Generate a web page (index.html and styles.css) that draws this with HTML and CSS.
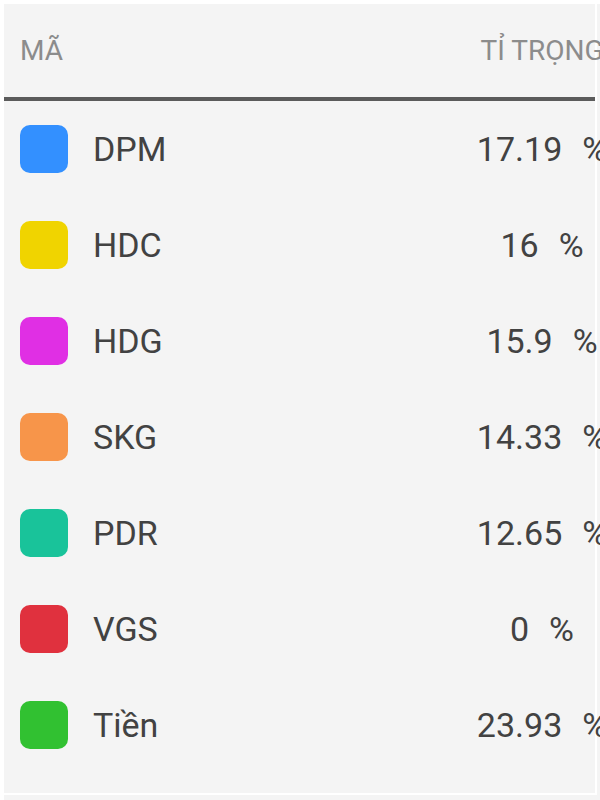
FILE: index.html
```html
<!DOCTYPE html>
<html lang="vi">
<head>
<meta charset="utf-8">
<link rel="stylesheet" href="styles.css">
</head>
<body>
<div class="page">
  <div class="table">
    <div class="head">
      <div class="name">Mã</div>
      <div class="val">Tỉ trọng</div>
    </div>
    <div class="row"><span class="sw sw-blue"></span><span class="name">DPM</span><span class="val">17.19<span class="pct">%</span></span></div>
    <div class="row"><span class="sw sw-yellow"></span><span class="name">HDC</span><span class="val">16<span class="pct">%</span></span></div>
    <div class="row"><span class="sw sw-magenta"></span><span class="name">HDG</span><span class="val">15.9<span class="pct">%</span></span></div>
    <div class="row"><span class="sw sw-orange"></span><span class="name">SKG</span><span class="val">14.33<span class="pct">%</span></span></div>
    <div class="row"><span class="sw sw-teal"></span><span class="name">PDR</span><span class="val">12.65<span class="pct">%</span></span></div>
    <div class="row"><span class="sw sw-red"></span><span class="name">VGS</span><span class="val">0<span class="pct">%</span></span></div>
    <div class="row"><span class="sw sw-green"></span><span class="name">Tiền</span><span class="val">23.93<span class="pct">%</span></span></div>
  </div>
</div>
</body>
</html>
```
FILE: styles.css
```css
html { background: #ffffff; }
body {
  margin: 0;
  padding: 4px 0 0 4px;
  font-family: Roboto, "Liberation Sans", sans-serif;
  overflow: hidden;
}
.page {
  background: #f4f4f4;
  height: 796px;
  width: 596px;
}
.table {
  width: 593px;
  height: 791px;
  border-right: 2px solid #ffffff;
  border-bottom: 2px solid #ffffff;
  box-sizing: border-box;
}
.head {
  display: flex;
  align-items: center;
  height: 93px;
  border-bottom: 4px solid #5b5b5b;
  padding-left: 16px;
  color: #8c8c8c;
  font-size: 28px;
  text-transform: uppercase;
}
.head .name { flex: 1; }
.row {
  display: flex;
  align-items: center;
  height: 96px;
  padding-left: 16px;
  color: #424242;
  font-size: 34px;
}
.sw {
  width: 48px;
  height: 48px;
  border-radius: 10px;
  margin-right: 25px;
  flex: none;
}
.name { flex: 1; }
.val {
  width: 132px;
  flex: none;
  text-align: center;
  white-space: nowrap;
  margin-right: -13px;
}
.pct { margin-left: 20px; }
.sw-blue { background: #3390ff; }
.sw-yellow { background: #f0d400; }
.sw-magenta { background: #e02fe4; }
.sw-orange { background: #f7954a; }
.sw-teal { background: #19c39a; }
.sw-red { background: #e0313e; }
.sw-green { background: #31c131; }
```
